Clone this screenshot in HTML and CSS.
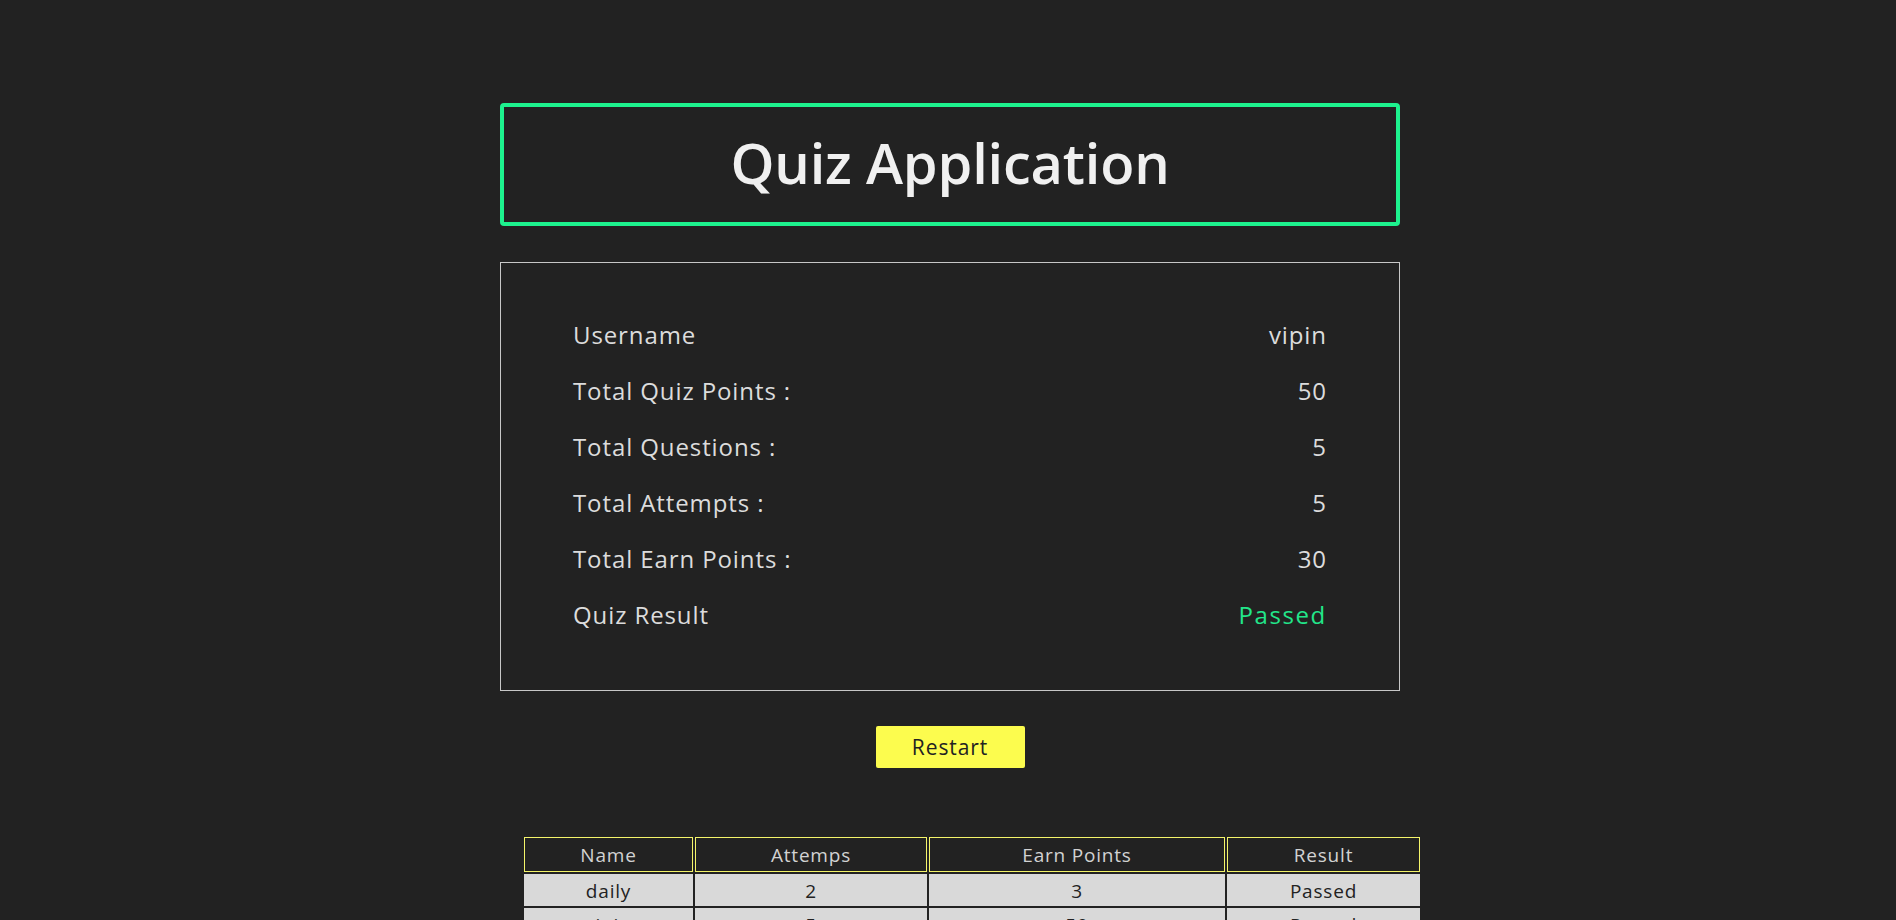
FILE: index.html
```html
<!DOCTYPE html>
<html lang="en">
<head>
<meta charset="utf-8">
<title>Quiz Application</title>
<link rel="stylesheet" href="styles.css">
</head>
<body>
<div class="page">
  <main class="app">
    <header class="title-box">
      <h1 class="title">Quiz Application</h1>
    </header>

    <section class="result-box">
      <div class="row"><span>Username</span><span>vipin</span></div>
      <div class="row"><span>Total Quiz Points :</span><span>50</span></div>
      <div class="row"><span>Total Questions :</span><span>5</span></div>
      <div class="row"><span>Total Attempts :</span><span>5</span></div>
      <div class="row"><span>Total Earn Points :</span><span>30</span></div>
      <div class="row"><span>Quiz Result</span><span class="passed">Passed</span></div>
    </section>

    <div class="actions">
      <button class="restart" type="button">Restart</button>
    </div>

    <div class="table-wrap">
      <table class="history">
        <thead>
          <tr>
            <th class="c-name">Name</th>
            <th class="c-att">Attemps</th>
            <th class="c-earn">Earn Points</th>
            <th class="c-res">Result</th>
          </tr>
        </thead>
        <tbody>
          <tr><td>daily</td><td>2</td><td>3</td><td>Passed</td></tr>
          <tr><td>vipin</td><td>5</td><td>50</td><td>Passed</td></tr>
        </tbody>
      </table>
    </div>
  </main>
</div>
</body>
</html>
```

FILE: styles.css
```css
html {
  background: #222222;
}

body {
  margin: 0;
  background: #222222;
  font-family: "Open Sans", "Noto Sans", sans-serif;
  color: #dcdcdc;
}

.page {
  display: flex;
  justify-content: center;
  padding: 103px 0 0 4px;
}

.app {
  width: 900px;
  display: flex;
  flex-direction: column;
}

.title-box {
  border: 4px solid #1df28e;
  border-radius: 4px;
  padding: 17px 0 22px;
  text-align: center;
}

.title {
  margin: 0;
  font-size: 56px;
  line-height: 76px;
  font-weight: 600;
  color: #f0f0f0;
  letter-spacing: -0.2px;
}

.result-box {
  margin-top: 36px;
  border: 1px solid #c8c8c8;
  padding: 54px 73px 57px 72px;
  display: flex;
  flex-direction: column;
  gap: 20px;
}

.row {
  display: flex;
  justify-content: space-between;
  font-size: 24px;
  line-height: 36px;
  letter-spacing: 0.9px;
  color: #dcdcdc;
}

.row span:last-child {
  margin-right: -0.9px;
}

.passed {
  color: #22e68a;
  letter-spacing: 1.6px;
}

.actions {
  display: flex;
  justify-content: center;
  margin-top: 35px;
}

.restart {
  width: 149px;
  height: 42px;
  border: none;
  border-radius: 2px;
  background: #fcfc4e;
  color: #222222;
  font-family: "Open Sans", "Noto Sans", sans-serif;
  font-size: 21px;
  letter-spacing: 0.9px;
  padding: 0;
  cursor: pointer;
}

.table-wrap {
  margin-top: 67px;
  padding-left: 22px;
}

.history {
  width: 900px;
  border-collapse: separate;
  border-spacing: 2px;
  table-layout: fixed;
  font-size: 19px;
  letter-spacing: 0.8px;
}

.history th,
.history td {
  box-sizing: border-box;
  text-align: center;
  padding: 0;
}

.history th {
  height: 35px;
  border: 1px solid #f4f46a;
  color: #d2d2d2;
  font-weight: 400;
}

.history td {
  height: 32px;
  padding-top: 2px;
  border: 1px solid transparent;
  background: #d9d9d9;
  color: #222222;
}

.c-name { width: 169px; }
.c-att { width: 232px; }
.c-earn { width: 296px; }
.c-res { width: 193px; }
```
